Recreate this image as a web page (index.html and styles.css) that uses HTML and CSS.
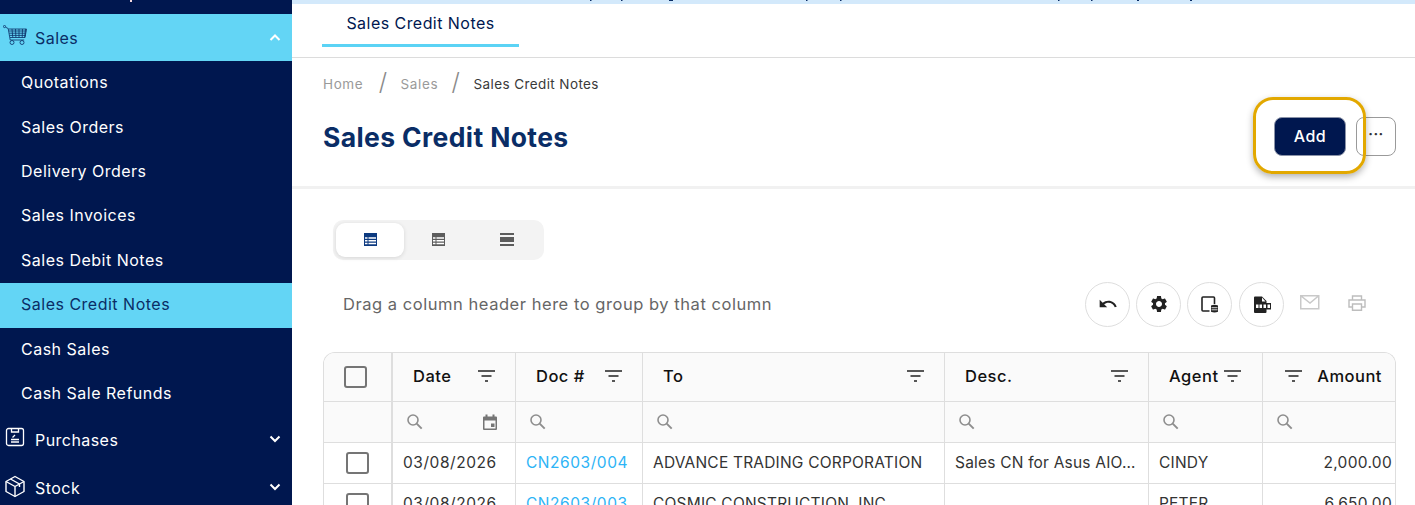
FILE: index.html
```html
<!DOCTYPE html>
<html lang="en">
<head>
<meta charset="utf-8">
<title>Sales Credit Notes</title>
<link rel="stylesheet" href="styles.css">
</head>
<body>
<svg class="defs" width="0" height="0" aria-hidden="true">
  <defs>
    <g id="i-filter"><path d="M0 1h17M3.500 6h10M7 11h3" fill="none" stroke="currentColor" stroke-width="1.700"/></g>
    <g id="i-search"><circle cx="6" cy="6" r="5" fill="none" stroke="currentColor" stroke-width="1.600"/><path d="M9.700 9.700l5 5" fill="none" stroke="currentColor" stroke-width="1.900"/></g>
    <g id="i-chev-down"><path d="M1.500 1.500L6 6l4.500-4.500" fill="none" stroke="currentColor" stroke-width="2"/></g>
    <g id="i-chev-up"><path d="M1.500 6L6 1.500l4.500 4.500" fill="none" stroke="currentColor" stroke-width="2"/></g>
    <g id="i-table"><path d="M0 0h13v13H0z" fill="currentColor"/><path d="M1 4.200h2.500v1.500H1zM4.500 4.200H12v1.500H4.500zM1 7h2.500v1.500H1zM4.500 7H12v1.500H4.500zM1 9.800h2.500v1.500H1zM4.500 9.800H12v1.500H4.500z" fill="#fff"/></g>
  </defs>
</svg>
<div class="app">
  <aside class="side">
    <div class="nav-clip"><svg width="292" height="3" viewBox="0 0 292 3"><rect x="130" y="0" width="2" height="2" fill="#f4d9e0"/></svg></div>
    <div class="nav-head nav-head-open">
      <svg class="cart" width="24" height="21" viewBox="0 0 24 21"><g fill="none" stroke="#0a2d66" stroke-width="0.800"><circle cx="1.500" cy="1.500" r="1.100"/><path d="M2.500 2.200l2.700 1.300 2 11.500h14"/><path d="M5.500 4h18l-1.500 8.500H7M9 4l.8 8.500M12.500 4l.4 8.500M16 4v8.500M19.500 4l-.3 8.500M22.500 4l-.8 8.500M5.800 6h17.500M6.200 8.200h16.700M6.600 10.400h16"/><circle cx="9" cy="17.500" r="2"/><circle cx="19" cy="17.500" r="2"/></g></svg>
      <span class="nav-label">Sales</span>
      <svg class="chev" width="12" height="8" viewBox="0 0 12 8"><use href="#i-chev-up"/></svg>
    </div>
    <nav class="sub">
      <a class="sub-item">Quotations</a>
      <a class="sub-item">Sales Orders</a>
      <a class="sub-item">Delivery Orders</a>
      <a class="sub-item">Sales Invoices</a>
      <a class="sub-item">Sales Debit Notes</a>
      <a class="sub-item sub-active">Sales Credit Notes</a>
      <a class="sub-item">Cash Sales</a>
      <a class="sub-item">Cash Sale Refunds</a>
    </nav>
    <div class="nav-head nav-purch">
      <svg class="nav-ic" width="20" height="20" viewBox="0 0 20 20"><g fill="none" stroke="#fff" stroke-width="1.300"><rect x="1.500" y="1.500" width="17" height="17" rx="2"/><path d="M6.500 1.500v3.500h7V1.500"/><path d="M6 15h8M6 12.500h8"/><path d="M7.500 10.500l2.500-2.500"/></g></svg>
      <span class="nav-label">Purchases</span>
      <svg class="chev" width="12" height="8" viewBox="0 0 12 8"><use href="#i-chev-down"/></svg>
    </div>
    <div class="nav-head nav-stock">
      <svg class="nav-ic" width="22" height="23" viewBox="0 0 22 23"><g fill="none" stroke="#fff" stroke-width="1.400" stroke-linejoin="round"><path d="M11 1.500l9 5v10l-9 5-9-5v-10z"/><path d="M2 6.500l9 5 9-5M11 11.500v10M6.500 4l9 5v3"/></g></svg>
      <span class="nav-label">Stock</span>
      <svg class="chev" width="12" height="8" viewBox="0 0 12 8"><use href="#i-chev-down"/></svg>
    </div>
  </aside>
  <main class="main">
    <div class="topstrip"><svg width="1123" height="4" viewBox="0 0 1123 4"><g fill="#0a2d66"><rect x="298" width="1.500" height="1"/><rect x="329" width="1.500" height="1"/><rect x="377" width="4" height="1"/><rect x="514" width="1.500" height="1"/><rect x="548" width="1.500" height="1"/><rect x="766" width="1.500" height="1"/><rect x="799" width="1.500" height="1"/><rect x="845" width="2" height="1"/><rect x="898" width="2" height="1"/></g></svg></div>
    <div class="tabs"><a class="tab">Sales Credit Notes</a></div>
    <section class="pagehead">
      <div class="crumbs">
        <span class="crumb crumb-home">Home</span><span class="sep">/</span>
        <span class="crumb">Sales</span><span class="sep">/</span>
        <span class="crumb crumb-cur">Sales Credit Notes</span>
      </div>
      <div class="titlerow">
        <h1 class="title">Sales Credit Notes</h1>
        <div class="actions">
          <button class="btn-add">Add</button>
          <button class="btn-more">···</button>
          <span class="highlight"></span>
        </div>
      </div>
    </section>
    <section class="content">
      <div class="density">
        <span class="den den-on"><svg width="13" height="13" viewBox="0 0 13 13"><use href="#i-table"/></svg></span>
        <span class="den"><svg width="13" height="13" viewBox="0 0 13 13"><use href="#i-table"/></svg></span>
        <span class="den"><svg width="14" height="13" viewBox="0 0 14 13"><path d="M0 0h14v2H0zM0 4h14v5H0zM0 11h14v2H0z" fill="currentColor"/></svg></span>
      </div>
      <div class="toolbar">
        <span class="grouphint">Drag a column header here to group by that column</span>
        <div class="tools">
          <span class="tool"><svg width="20" height="20" viewBox="0 0 24 24"><path d="M12.500 8c-2.650 0-5.050.99-6.900 2.600L2 7v9h9l-3.620-3.620c1.390-1.160 3.160-1.880 5.120-1.880 3.540 0 6.550 2.310 7.600 5.500l2.370-.78C21.080 11.030 17.150 8 12.500 8z" fill="#222"/></svg></span>
          <span class="tool"><svg width="20" height="20" viewBox="0 0 24 24"><path d="M19.140 12.940c.04-.3.06-.61.06-.94 0-.32-.02-.64-.07-.94l2.030-1.580c.18-.14.23-.41.12-.61l-1.920-3.320c-.12-.22-.37-.29-.59-.22l-2.390.96c-.5-.38-1.030-.7-1.620-.94l-.36-2.540c-.04-.24-.24-.41-.48-.41h-3.840c-.24 0-.43.17-.47.41l-.36 2.540c-.59.24-1.130.57-1.620.94l-2.390-.96c-.22-.08-.47 0-.59.22L2.740 8.870c-.12.21-.08.47.12.61l2.030 1.580c-.05.3-.09.63-.09.94s.02.64.07.94l-2.030 1.580c-.18.14-.23.41-.12.61l1.920 3.320c.12.22.37.29.59.22l2.390-.96c.5.38 1.030.7 1.620.94l.36 2.54c.05.24.24.41.48.41h3.840c.24 0 .44-.17.47-.41l.36-2.54c.59-.24 1.130-.56 1.620-.94l2.390.96c.22.08.47 0 .59-.22l1.920-3.320c.12-.22.07-.47-.12-.61l-2.010-1.580zM12 15.600c-1.980 0-3.600-1.620-3.600-3.600s1.620-3.600 3.600-3.600 3.600 1.620 3.600 3.600-1.620 3.600-3.600 3.600z" fill="#222"/></svg></span>
          <span class="tool tool-wide"><svg width="18" height="17" viewBox="0 0 18 17"><path d="M8.500 15H2a1 1 0 0 1-1-1V2a1 1 0 0 1 1-1h10.500a1 1 0 0 1 1 1v6" fill="none" stroke="#222" stroke-width="1.600"/><path d="M10 9.500q3.500-1.400 7 0v6.300q-3.500 1.400-7 0z" fill="#222"/><path d="M10.500 11.700h6M10.500 13.800h6" stroke="#fff" stroke-width=".8"/></svg></span>
          <span class="tool"><svg width="18" height="17" viewBox="0 0 18 17"><path d="M1 1.500A1 1 0 0 1 2 .5h7l4.500 4.500V16a1 1 0 0 1-1 1H2a1 1 0 0 1-1-1z" fill="#222"/><path d="M9 1.500V5.500h3.500z" fill="#fff"/><path d="M2 7h16v6.500H2z" fill="#222"/><path d="M3 8.500h2.500v3.500H3zM6.500 8.500H9v3.500H6.500zM10.500 8.500H13v3.500h-2.500zM14.500 8.500H17v3.500h-2.500z" fill="#fff"/></svg></span>
          <span class="tool-plain"><svg width="20" height="15" viewBox="0 0 20 15"><path d="M.75.75h18v13h-18zM.75.75L10 8l8.750-7.250" fill="none" stroke="#c9c9c9" stroke-width="1.500"/></svg></span>
          <span class="tool-plain tool-print"><svg width="18" height="16" viewBox="0 0 18 16"><g fill="none" stroke="#bdbdbd" stroke-width="1.400"><path d="M4.500 5V1h9v4M4.500 12H1V5h16v7h-3.500"/><path d="M4.500 9h9v6.300h-9z"/></g></svg></span>
        </div>
      </div>
      <div class="grid">
        <div class="row row-head">
          <div class="cell c-check"><span class="check check-head"></span></div>
          <div class="cell c-date"><span class="h">Date</span><svg class="fi" width="17" height="12" viewBox="0 0 17 12"><use href="#i-filter"/></svg></div>
          <div class="cell c-doc"><span class="h">Doc #</span><svg class="fi" width="17" height="12" viewBox="0 0 17 12"><use href="#i-filter"/></svg></div>
          <div class="cell c-to"><span class="h">To</span><svg class="fi" width="17" height="12" viewBox="0 0 17 12"><use href="#i-filter"/></svg></div>
          <div class="cell c-desc"><span class="h">Desc.</span><svg class="fi" width="17" height="12" viewBox="0 0 17 12"><use href="#i-filter"/></svg></div>
          <div class="cell c-agent"><span class="h">Agent</span><svg class="fi" width="17" height="12" viewBox="0 0 17 12"><use href="#i-filter"/></svg></div>
          <div class="cell c-amt"><svg class="fi" width="17" height="12" viewBox="0 0 17 12"><use href="#i-filter"/></svg><span class="h">Amount</span></div>
        </div>
        <div class="row row-filter">
          <div class="cell c-check"></div>
          <div class="cell c-date"><svg class="se" width="16" height="16" viewBox="0 0 16 16"><use href="#i-search"/></svg><svg class="cal" width="16" height="17" viewBox="0 0 16 17"><path d="M1 3.500a1 1 0 0 1 1-1h1.500V.5h2v2h5V.5h2v2H14a1 1 0 0 1 1 1V15a1 1 0 0 1-1 1H2a1 1 0 0 1-1-1z M2.500 6.500V14.500h11V6.500z" fill="#757575" fill-rule="evenodd"/><path d="M9 9.500h3.500V13H9z" fill="#757575"/></svg></div>
          <div class="cell c-doc"><svg class="se" width="16" height="16" viewBox="0 0 16 16"><use href="#i-search"/></svg></div>
          <div class="cell c-to"><svg class="se" width="16" height="16" viewBox="0 0 16 16"><use href="#i-search"/></svg></div>
          <div class="cell c-desc"><svg class="se" width="16" height="16" viewBox="0 0 16 16"><use href="#i-search"/></svg></div>
          <div class="cell c-agent"><svg class="se" width="16" height="16" viewBox="0 0 16 16"><use href="#i-search"/></svg></div>
          <div class="cell c-amt"><svg class="se" width="16" height="16" viewBox="0 0 16 16"><use href="#i-search"/></svg></div>
        </div>
        <div class="row row-data">
          <div class="cell c-check"><span class="check"></span></div>
          <div class="cell c-date digits">03/08/2026</div>
          <div class="cell c-doc digits"><a class="link">CN2603/004</a></div>
          <div class="cell c-to">ADVANCE TRADING CORPORATION</div>
          <div class="cell c-desc">Sales CN for Asus AIO…</div>
          <div class="cell c-agent">CINDY</div>
          <div class="cell c-amt num">2,000.00</div>
        </div>
        <div class="row row-data">
          <div class="cell c-check"><span class="check"></span></div>
          <div class="cell c-date digits">03/08/2026</div>
          <div class="cell c-doc digits"><a class="link">CN2603/003</a></div>
          <div class="cell c-to">COSMIC CONSTRUCTION, INC</div>
          <div class="cell c-desc"></div>
          <div class="cell c-agent">PETER</div>
          <div class="cell c-amt num">6,650.00</div>
        </div>
      </div>
    </section>
  </main>
</div>
</body>
</html>
```
FILE: styles.css
```css
* { box-sizing: border-box; }
html, body { margin: 0; padding: 0; height: 505px; overflow: hidden; background: #fff; }
body { font-family: "Inter", "Open Sans", sans-serif; color: #333; }
svg { display: block; }
.defs { position: absolute; }
.app { display: flex; height: 505px; overflow: hidden; }

.side { width: 292px; flex: none; background: #00174f; color: #fff; overflow: hidden; }
.nav-clip { height: 14px; }
.nav-head { display: flex; align-items: center; height: 47px; padding-right: 11px; font-size: 16px; letter-spacing: 0.45px; }
.nav-head-open { background: #63d5f5; color: #0a2d66; padding-top: 1px; }
.nav-label { flex: 1; margin-left: 35px; }
.cart { margin-left: 3px; margin-right: -27px; margin-top: -5px; }
.nav-ic { margin: 0 -25px 5px 5px; }
.nav-purch { margin-top: 2px; padding-bottom: 4px; }
.nav-purch .chev { margin-bottom: 1px; }
.nav-stock { height: 48px; padding-bottom: 2px; }
.nav-stock .nav-ic { margin: 0 -26px 4px 4px; }
.nav-stock .chev { margin-bottom: 2px; }
.chev { color: #fff; }
.sub { display: flex; flex-direction: column; }
.sub-item { height: 44.43px; display: flex; align-items: center; padding: 0 0 2px 21px; font-size: 16px; color: #fff; letter-spacing: 0.5px; }
.sub-active { background: #63d5f5; color: #0a2d66; }

.main { flex: 1; min-width: 0; overflow: hidden; display: flex; flex-direction: column; }
.topstrip { height: 4px; background: #d3e9fb; flex: none; overflow: hidden; }
.tabs { height: 54px; flex: none; padding-left: 30px; border-bottom: 1px solid #dcdcdc; }
.tab { display: inline-flex; justify-content: center; width: 197px; height: 43px; padding-top: 9px; color: #00174f; font-size: 16px; letter-spacing: 0.45px; border-bottom: 3px solid #5bd3f5; }

.pagehead { flex: none; height: 131px; border-bottom: 3px solid #f1f1f1; padding: 0 19px 0 31px; }
.crumbs { display: flex; align-items: center; height: 54px; font-size: 13.5px; padding-bottom: 3px; letter-spacing: 0.6px; }
.crumb { color: #9a9a9a; }
.crumb-home { margin-right: 2px; }
.crumb-cur { color: #3a3a3a; letter-spacing: 0.4px; }
.sep { color: #8a8a8a; font-size: 24px; line-height: 24px; margin: 0 13.5px; font-weight: 300; padding-bottom: 3px; letter-spacing: 0; }
.titlerow { display: flex; align-items: center; justify-content: space-between; height: 50px; }
.title { margin: 0; font-size: 26.5px; font-weight: 700; color: #0a2d66; letter-spacing: 0.38px; }
.actions { display: flex; align-items: center; gap: 10px; position: relative; padding-bottom: 2px; }
.btn-add { width: 72px; height: 39px; border: 1px solid #8b93a8; border-radius: 8px; background: #00174f; color: #fff; font: 500 16px "Inter", sans-serif; letter-spacing: 0.5px; }
.btn-more { width: 40px; height: 39px; border: 1px solid #9a9a9a; border-radius: 8px; background: #fff; color: #333; font: 700 14px "Inter", sans-serif; padding: 0 0 5px; letter-spacing: 0.5px; }
.highlight { position: absolute; left: -21px; top: -20px; width: 113px; height: 77px; border: 3px solid #e2a800; border-radius: 20px; box-shadow: 0 3px 7px rgba(0,0,0,.3); pointer-events: none; }

.content { flex: 1; min-height: 0; padding: 31px 19px 0 31px; }
.density { display: flex; width: 211px; height: 40px; background: #f3f3f3; border-radius: 10px; padding: 3px; margin-left: 10px; }
.den { width: 68.5px; height: 34px; display: flex; align-items: center; justify-content: center; color: #5c5c5c; border-radius: 9px; padding-bottom: 2px; }
.den-on { background: #fff; color: #0d3a80; box-shadow: 0 1px 4px rgba(0,0,0,.12); }
.toolbar { display: flex; align-items: center; height: 46px; margin-top: 21px; padding-left: 20px; }
.grouphint { flex: 1; color: #666; font-size: 16.5px; letter-spacing: 0.54px; }
.tools { display: flex; align-items: center; gap: 6px; padding-right: 30px; }
.tool { width: 45px; height: 45px; border: 1px solid #dedede; border-radius: 50%; display: flex; align-items: center; justify-content: center; }
.tool-wide { margin-right: 1px; }
.tool-plain { display: flex; margin: -4px 0 0 10px; }
.tool-print { margin: -3px 0 0 22px; }

.grid { margin-top: 25px; width: 1073px; border: 1px solid #dedede; border-bottom: 0; border-radius: 12px 12px 0 0; overflow: hidden; }
.row { display: flex; border-bottom: 1px solid #dedede; }
.row-head { height: 49px; background: #fafafa; }
.row-filter { height: 41px; background: #fafafa; }
.row-data { height: 41px; }
.cell { display: flex; align-items: center; flex: none; height: 100%; border-right: 1px solid #dedede; padding: 0 10px 2px; font-size: 15.5px; color: #333; white-space: nowrap; overflow: hidden; letter-spacing: 0.2px; }
.cell:last-child { border-right: 0; }
.c-check { width: 69px; justify-content: center; border-right-width: 2px; padding: 0 2px 0 0; }
.c-date { width: 123px; }
.c-doc { width: 127px; }
.c-to { width: 302px; }
.c-desc { width: 204px; }
.c-agent { width: 114px; }
.c-amt { width: 133px; padding: 0 4px 2px 14px; }
.digits { letter-spacing: 0.55px; }
.row-head .cell { justify-content: space-between; padding: 0 20px 2px; }
.row-head .c-check { justify-content: center; padding: 0 2px 0 0; }
.row-head .c-agent { padding: 0 21px 2px 20px; }
.row-head .c-amt { padding: 0 14px 2px 22px; }
.h { font-size: 16.5px; font-weight: 500; color: #111; letter-spacing: 0.5px; }
.fi { color: #222; flex: none; }
.check { width: 23px; height: 22px; border: 2px solid #757575; border-radius: 3px; display: block; margin-left: 2px; }
.check-head { margin: 0 2px 0 0; }
.row-filter .cell { justify-content: space-between; padding: 0 14px; }
.row-filter .c-date { padding-right: 17px; }
.se { color: #8e8e8e; flex: none; }
.cal { flex: none; }
.link { color: #2db4f6; }
.num { justify-content: flex-end; letter-spacing: 0.3px; }
```
